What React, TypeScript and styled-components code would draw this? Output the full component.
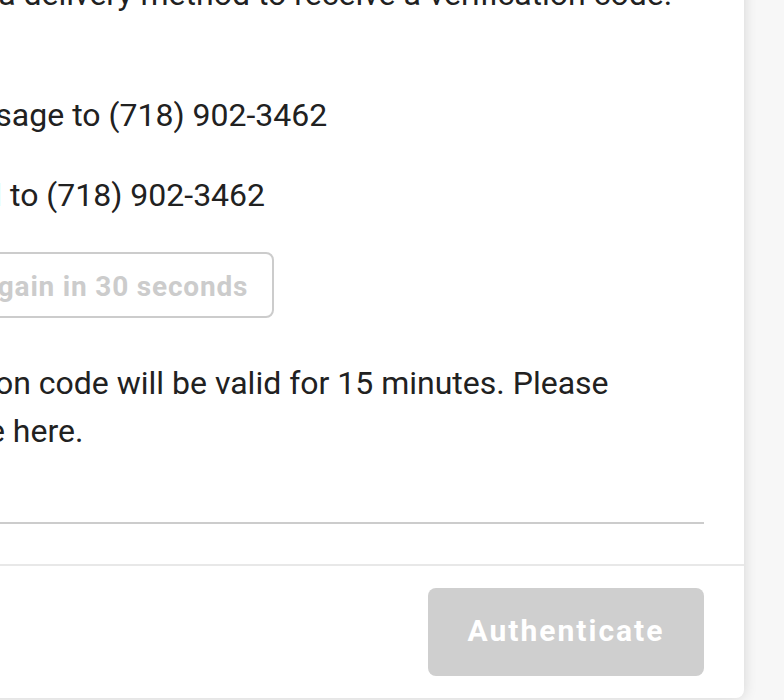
import React from "react";
import styled, { createGlobalStyle } from "styled-components";

const Global = createGlobalStyle`
  html, body { margin: 0; padding: 0; }
  body {
    background: #f7f7f7;
    font-family: Roboto, "Liberation Sans", Arial, sans-serif;
    color: #212121;
  }
`;

const Page = styled.div`
  height: 700px;
  overflow: hidden;
  display: flex;
  justify-content: flex-end;
  align-items: flex-end;
  padding: 0 40px 2px 0;
  box-sizing: border-box;
`;

const Dialog = styled.div`
  flex-shrink: 0;
  width: 983px;
  background: #ffffff;
  border-radius: 8px;
  box-shadow: 0 0 14px rgba(0, 0, 0, 0.14);
  display: flex;
  flex-direction: column;
`;

const Body = styled.div`
  padding: 40px 40px 40px;
  display: flex;
  flex-direction: column;
`;

const Text = styled.p<{ $mb?: number }>`
  margin: 0 0 ${(p) => p.$mb ?? 0}px;
  font-size: 32px;
  line-height: 48px;
  font-weight: 400;
`;

const Options = styled.div`
  display: flex;
  flex-direction: column;
`;

const Option = styled.label`
  display: flex;
  align-items: center;
  gap: 28px;
  height: 80px;
  font-size: 32px;
  line-height: 48px;
  cursor: pointer;
`;

const Radio = styled.span<{ $checked?: boolean }>`
  width: 36px;
  height: 36px;
  border-radius: 50%;
  box-sizing: border-box;
  border: 4px solid ${(p) => (p.$checked ? "#1976d2" : "#757575")};
  flex-shrink: 0;
`;

const Resend = styled.button`
  align-self: flex-start;
  margin: 17px 0 41px;
  height: 66px;
  padding: 2px 24px 0 32px;
  background: #fff;
  border: 2px solid #cccccc;
  border-radius: 8px;
  color: #cccccc;
  font-family: inherit;
  font-size: 28px;
  font-weight: 700;
  letter-spacing: 0.8px;
  white-space: nowrap;
`;

const CodeInput = styled.input`
  margin-top: 13px;
  height: 54px;
  border: none;
  border-bottom: 2px solid #cccccc;
  outline: none;
  font-family: inherit;
  font-size: 32px;
  padding: 0;
  background: transparent;
`;

const Footer = styled.div`
  border-top: 2px solid #e8e8e8;
  padding: 22px 40px;
  display: flex;
  justify-content: flex-end;
`;

const PrimaryButton = styled.button`
  width: 276px;
  height: 88px;
  border: none;
  border-radius: 8px;
  background: #cfcfcf;
  color: #ffffff;
  font-family: inherit;
  font-size: 30px;
  font-weight: 700;
  letter-spacing: 2px;
  padding: 0 0 4px;
`;

export default function App() {
  return (
    <>
      <Global />
      <Page>
        <Dialog>
          <Body>
            <Text $mb={57}>
              Please select a delivery method to receive a verification code.
            </Text>
            <Options>
              <Option>
                <Radio $checked />
                Text message to (718) 902-3462
              </Option>
              <Option>
                <Radio />
                Voice call to (718) 902-3462
              </Option>
            </Options>
            <Resend disabled>Send code again in 30 seconds</Resend>
            <Text>
              Your verification code will be valid for 15 minutes. Please
              <br />
              enter the code here.
            </Text>
            <CodeInput aria-label="Verification code" />
          </Body>
          <Footer>
            <PrimaryButton disabled>Authenticate</PrimaryButton>
          </Footer>
        </Dialog>
      </Page>
    </>
  );
}
